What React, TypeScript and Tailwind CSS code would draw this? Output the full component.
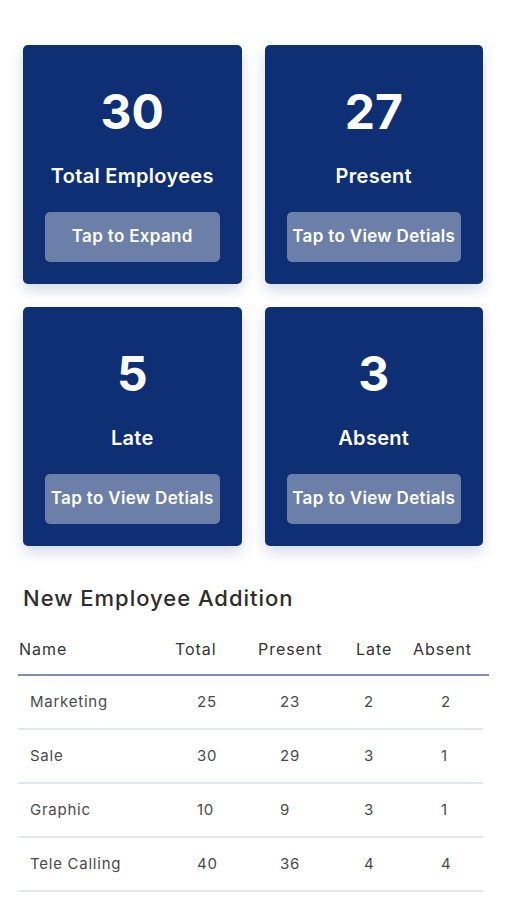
import React from 'react';

// ── Data ─────────────────────────────────────────────────────────────────────
const STATS = [
  { value: '30', label: 'Total Employees', action: 'Tap to Expand' },
  { value: '27', label: 'Present', action: 'Tap to View Detials' },
  { value: '5', label: 'Late', action: 'Tap to View Detials' },
  { value: '3', label: 'Absent', action: 'Tap to View Detials' },
];

const ROWS = [
  { name: 'Marketing', total: 25, present: 23, late: 2, absent: 2 },
  { name: 'Sale', total: 30, present: 29, late: 3, absent: 1 },
  { name: 'Graphic', total: 10, present: 9, late: 3, absent: 1 },
  { name: 'Tele Calling', total: 40, present: 36, late: 4, absent: 4 },
];

const FONT = { fontFamily: 'Inter, "Noto Sans", sans-serif' };

const StatCard: React.FC<{ value: string; label: string; action: string }> = ({ value, label, action }) => (
  <div className="h-[239px] bg-[#0e2f74] rounded-[5px] shadow-[0_6px_14px_rgba(14,47,116,0.18)] flex flex-col items-center pt-[43px] px-[22px]">
    <div className="text-white text-[48px] leading-[48px] font-bold">{value}</div>
    <div className="mt-[26px] text-white text-[20px] leading-[28px] font-semibold tracking-[0.015em]">{label}</div>
    <button className="mt-[22px] w-full h-[50px] rounded-[5px] bg-[#6b7fa8] text-white text-[17px] font-semibold tracking-[0.02em] whitespace-nowrap">
      {action}
    </button>
  </div>
);

export default function App() {
  return (
    <div className="min-h-[900px] bg-white text-[#333]" style={FONT}>
      <div className="px-[23px] pt-[45px] grid grid-cols-2 gap-[23px]">
        {STATS.map((s) => (
          <StatCard key={s.label} {...s} />
        ))}
      </div>

      {/* Table */}
      <h2 className="ml-[23px] mt-[38px] text-[22px] leading-[28px] font-medium tracking-[0.045em] text-[#2d2d2d]">
        New Employee Addition
      </h2>

      <div className="mx-[18px] mt-[14px]">
        <div className="w-[471px] h-[50px] grid grid-cols-[157px_83px_98px_57px_1fr] items-center text-[16px] tracking-[0.06em] text-[#333] border-b-2 border-[#7b8fb8] pb-[2px]">
          <div className="pl-[1px]">Name</div>
          <div>Total</div>
          <div>Present</div>
          <div>Late</div>
          <div>Absent</div>
        </div>
        {ROWS.map((r) => (
          <div
            key={r.name}
            className="w-[465px] h-[54px] grid grid-cols-[179px_83px_84px_77px_1fr] items-center text-[15px] tracking-[0.05em] text-[#4a4a4a] border-b-2 border-[#e4e7ee]"
          >
            <div className="pl-[12px]">{r.name}</div>
            <div>{r.total}</div>
            <div>{r.present}</div>
            <div>{r.late}</div>
            <div>{r.absent}</div>
          </div>
        ))}
      </div>
    </div>
  );
}
